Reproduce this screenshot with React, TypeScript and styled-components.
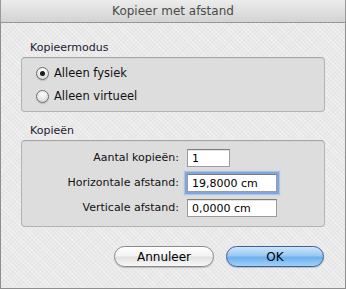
import React from "react";
import styled, { createGlobalStyle } from "styled-components";

const GlobalStyle = createGlobalStyle`
  html, body {
    margin: 0;
    padding: 0;
    background: #e9e9e9;
  }
  * {
    box-sizing: border-box;
  }
`;

const App = () => {
  return (
    <>
      <GlobalStyle />
      <WindowS>
        <TitleBarS>Kopieer met afstand</TitleBarS>
        <ContentS>
          <GroupLabelS>Kopieermodus</GroupLabelS>
          <GroupBoxS>
            <RadioList>
              <RadioRow label="Alleen fysiek" checked />
              <RadioRow label="Alleen virtueel" />
            </RadioList>
          </GroupBoxS>

          <GroupLabelS $top={12}>Kopieën</GroupLabelS>
          <GroupBoxS>
            <FieldGridS>
              <FieldLabelS>Aantal kopieën:</FieldLabelS>
              <InputS $width={43} defaultValue="1" />
              <FieldLabelS>Horizontale afstand:</FieldLabelS>
              <InputS $width={90} $focused defaultValue="19,8000 cm" />
              <FieldLabelS>Verticale afstand:</FieldLabelS>
              <InputS $width={90} defaultValue="0,0000 cm" />
            </FieldGridS>
          </GroupBoxS>

          <ButtonRowS>
            <PushButtonS>Annuleer</PushButtonS>
            <PushButtonS $primary>OK</PushButtonS>
          </ButtonRowS>
        </ContentS>
      </WindowS>
    </>
  );
};

const RadioRow = ({ label, checked }: { label: string; checked?: boolean }) => {
  return (
    <RadioRowS>
      <RadioDotS $checked={!!checked} />
      <span>{label}</span>
    </RadioRowS>
  );
};

//style-----------------------------------------
const WindowS = styled.div`
  width: 346px;
  height: 289px;
  display: flex;
  flex-direction: column;
  border: 1px solid #8e8e8e;
  border-top: none;
  background-color: #e9e9e9;
  background-image: repeating-linear-gradient(
      45deg,
      rgba(255, 255, 255, 0.35) 0px,
      rgba(255, 255, 255, 0.35) 1px,
      transparent 1px,
      transparent 3px
    ),
    repeating-linear-gradient(
      -45deg,
      rgba(0, 0, 0, 0.025) 0px,
      rgba(0, 0, 0, 0.025) 1px,
      transparent 1px,
      transparent 3px
    );
  font-family: "DejaVu Sans", "Liberation Sans", sans-serif;
  color: #111;
`;

const TitleBarS = styled.div`
  height: 23px;
  flex: none;
  display: flex;
  align-items: center;
  justify-content: center;
  font-size: 12px;
  color: #4a4a4a;
  background: linear-gradient(#ececec, #d3d3d3);
  border-bottom: 1px solid #979797;
  margin: 0 -1px;
  border-left: 1px solid #9a9a9a;
  border-right: 1px solid #9a9a9a;
  padding-bottom: 1px;
`;

const ContentS = styled.div`
  display: flex;
  flex-direction: column;
  padding: 18px 20px 0 20px;
`;

const GroupLabelS = styled.div<{ $top?: number }>`
  font-size: 11px;
  line-height: 14px;
  height: 14px;
  padding-left: 9px;
  margin-top: ${(p) => p.$top || 0}px;
  margin-bottom: 2px;
  color: #231a33;
`;

const GroupBoxS = styled.div`
  border: 1px solid #b3b3b3;
  border-top-color: #a6a6a6;
  border-radius: 4px;
  background: #dedddd;
  box-shadow: inset 0 1px 0 rgba(0, 0, 0, 0.04);
`;

const RadioList = styled.div`
  display: flex;
  flex-direction: column;
  gap: 5px;
  padding: 6px 0 6px 14px;
`;

const RadioRowS = styled.div`
  display: flex;
  align-items: center;
  gap: 5px;
  height: 18px;
  font-size: 11.5px;
`;

const RadioDotS = styled.span<{ $checked: boolean }>`
  width: 13px;
  height: 13px;
  border-radius: 50%;
  border: 1px solid #6f6f6f;
  background: radial-gradient(circle at 50% 30%, #ffffff, #e6e6e6 55%, #c9c9c9);
  box-shadow: 0 1px 1px rgba(0, 0, 0, 0.15);
  display: flex;
  align-items: center;
  justify-content: center;
  &::after {
    content: "";
    width: 5px;
    height: 5px;
    border-radius: 50%;
    background: #1b1b1b;
    display: ${(p) => (p.$checked ? "block" : "none")};
  }
`;

const FieldGridS = styled.div`
  display: grid;
  grid-template-columns: 157px auto;
  column-gap: 8px;
  row-gap: 7px;
  align-items: center;
  padding: 8px 0 9px 0;
`;

const FieldLabelS = styled.div`
  text-align: right;
  font-size: 11px;
  line-height: 18px;
`;

const InputS = styled.input<{ $width: number; $focused?: boolean }>`
  width: ${(p) => p.$width}px;
  height: 18px;
  border: 1px solid #9c9c9c;
  border-top-color: #7d7d7d;
  background: #fff;
  font-family: "DejaVu Sans", "Liberation Sans", sans-serif;
  font-size: 11px;
  color: #000;
  padding: 0 4px;
  outline: none;
  box-shadow: ${(p) =>
    p.$focused ? "0 0 0 2px #7fa7dc, 0 0 1px 3px #a9c4ea" : "inset 0 1px 0 #e4e4e4"};
`;

const ButtonRowS = styled.div`
  display: flex;
  justify-content: flex-end;
  gap: 12px;
  margin-top: 19px;
  padding-right: 1px;
`;

const PushButtonS = styled.button<{ $primary?: boolean }>`
  width: ${(p) => (p.$primary ? 98 : 100)}px;
  height: 21px;
  border-radius: 11px;
  font-family: "DejaVu Sans", "Liberation Sans", sans-serif;
  font-size: 12px;
  color: #000;
  padding: 0;
  border: 1px solid ${(p) => (p.$primary ? "#3f5f92" : "#8a8a8a")};
  background: ${(p) =>
    p.$primary
      ? "linear-gradient(#cfe4fb 0%, #9ac8f4 45%, #6fb0ee 55%, #9dd1fb 100%)"
      : "linear-gradient(#ffffff 0%, #f3f3f3 45%, #e2e2e2 55%, #f8f8f8 100%)"};
  box-shadow: 0 1px 1px rgba(0, 0, 0, 0.2);
`;

export default App;
